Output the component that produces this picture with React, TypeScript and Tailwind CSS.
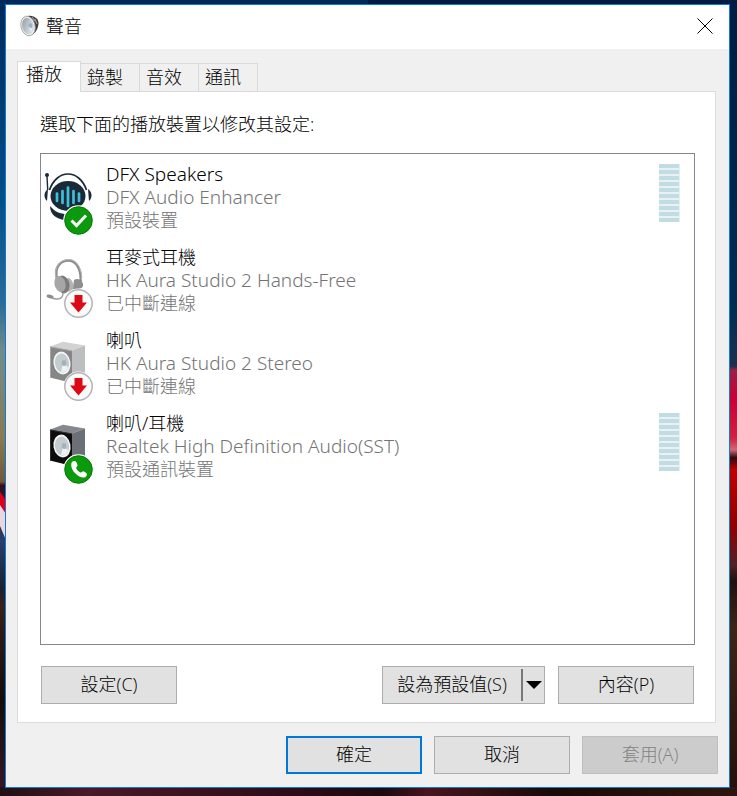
import { useState } from 'react';
import type { ReactNode } from 'react';

type Status = 'default' | 'disconnected' | 'call';

interface Device {
    name: string;
    driver: string;
    state: string;
    icon: ReactNode;
    status: Status;
    meter: boolean;
}

function Wallpaper() {
    return (
        <svg
            className="absolute inset-0 h-full w-full"
            viewBox="0 0 737 796"
            preserveAspectRatio="none"
            aria-hidden="true"
        >
            <defs>
                <linearGradient id="sky-left" x1="0" y1="0" x2="0" y2="1">
                    <stop offset="0" stopColor="#00285a" />
                    <stop offset="0.25" stopColor="#005088" />
                    <stop offset="0.38" stopColor="#2a6a98" />
                    <stop offset="0.44" stopColor="#708c8c" />
                    <stop offset="0.55" stopColor="#8a7a50" />
                    <stop offset="0.605" stopColor="#705838" />
                    <stop offset="0.61" stopColor="#301018" />
                    <stop offset="0.68" stopColor="#28406a" />
                    <stop offset="0.74" stopColor="#1a2030" />
                    <stop offset="0.76" stopColor="#3a2018" />
                    <stop offset="0.88" stopColor="#150c08" />
                    <stop offset="1" stopColor="#3a1828" />
                </linearGradient>
                <linearGradient id="sky-right" x1="0" y1="0" x2="0" y2="1">
                    <stop offset="0" stopColor="#001c44" />
                    <stop offset="0.38" stopColor="#002c54" />
                    <stop offset="0.46" stopColor="#1c3050" />
                    <stop offset="0.465" stopColor="#982048" />
                    <stop offset="0.5" stopColor="#c80038" />
                    <stop offset="0.55" stopColor="#d02040" />
                    <stop offset="0.565" stopColor="#d06878" />
                    <stop offset="0.575" stopColor="#300810" />
                    <stop offset="0.59" stopColor="#c00000" />
                    <stop offset="0.66" stopColor="#900000" />
                    <stop offset="0.71" stopColor="#502028" />
                    <stop offset="0.73" stopColor="#201010" />
                    <stop offset="0.79" stopColor="#402418" />
                    <stop offset="1" stopColor="#24100a" />
                </linearGradient>
                <linearGradient id="ground" x1="0" y1="0" x2="1" y2="0">
                    <stop offset="0" stopColor="#1e1016" />
                    <stop offset="0.12" stopColor="#4a1828" />
                    <stop offset="0.4" stopColor="#2c0c18" />
                    <stop offset="0.52" stopColor="#1c0a10" />
                    <stop offset="0.58" stopColor="#481420" />
                    <stop offset="0.75" stopColor="#180a08" />
                    <stop offset="1" stopColor="#2e160e" />
                </linearGradient>
            </defs>
            <rect width="369" height="796" fill="url(#sky-left)" />
            <rect x="368" width="369" height="796" fill="url(#sky-right)" />
            <path d="M0 492 L6 500 V514 L0 505Z" fill="#e00018" />
            <path d="M0 505 L6 514 V540 L0 526Z" fill="#ead6e0" />
            <rect y="787" width="737" height="9" fill="url(#ground)" />
        </svg>
    );
}

function TitleIcon() {
    return (
        <svg className="h-[22px] w-5" viewBox="0 0 20 22" aria-hidden="true">
            <defs>
                <linearGradient id="cone" x1="0" y1="0" x2="1" y2="1">
                    <stop offset="0" stopColor="#8e979c" />
                    <stop offset="0.6" stopColor="#c4d2d9" />
                    <stop offset="1" stopColor="#e6eef2" />
                </linearGradient>
            </defs>
            <path d="M8 1 C14 0 19 4 18.500 9 C18 14 15 19 11 20Z" fill="#3d3d3d" />
            <path d="M12 2 L15 6 M15 4 L17 9" stroke="#9a9a9a" strokeWidth="1.200" />
            <ellipse cx="8" cy="11" rx="7" ry="10" transform="rotate(-14 8 11)" fill="#f1f1f1" stroke="#9a9a9a" strokeWidth="0.800" />
            <ellipse cx="8" cy="11" rx="5.800" ry="8.400" transform="rotate(-14 8 11)" fill="url(#cone)" />
            <ellipse cx="10.500" cy="10.500" rx="2" ry="2.500" fill="#9fb0b8" />
            <path d="M9 12 L12 14 L11 17Z" fill="#eef4f6" />
        </svg>
    );
}

function RobotIcon() {
    return (
        <g>
            <circle cx="4" cy="12" r="2" fill="#1b2a38" />
            <path d="M4 13 L4.700 27" stroke="#1b2a38" strokeWidth="1.400" />
            <path d="M6.500 27 C10 17 17 11 25 11 C33 11 40 17 43.500 27" fill="none" stroke="#1b2a38" strokeWidth="1.700" />
            <path d="M5 26 C.5 29 .5 35 4 38Z" fill="#1b2a38" />
            <path d="M45 26 C49.500 29 49.500 35 46 38Z" fill="#1b2a38" />
            <ellipse cx="25" cy="33" rx="17.500" ry="15" fill="#1b2a38" />
            <path d="M7 43 C12 49 17 51 24 51 L22 57 C13 56 7 51 7 43Z" fill="#1b2a38" />
            <g stroke="#41bfd9" strokeWidth="2.700" strokeLinecap="round">
                <path d="M14 30.500 V38" />
                <path d="M19.500 28 V40" />
                <path d="M25 24.500 V43" />
                <path d="M30.500 28 V40" />
                <path d="M36 30.500 V38" />
            </g>
        </g>
    );
}

function HeadsetIcon() {
    return (
        <g>
            <path d="M14 33 C10.500 20 19 14 26 14.500 C34 15 39 25 37.500 36" fill="none" stroke="#8c8c8c" strokeWidth="2.600" />
            <path d="M13 32 C10.500 20 18 13.500 26 13.500 C35 14 39.500 25 38.500 34" fill="none" stroke="#b9b9b9" strokeWidth="1" />
            <ellipse cx="26" cy="39" rx="4.500" ry="7" transform="rotate(-14 26 39)" fill="#b5b5b5" />
            <ellipse cx="20" cy="38.500" rx="6.500" ry="9" transform="rotate(-14 20 38.500)" fill="#7b7b7b" />
            <ellipse cx="17" cy="38" rx="5.500" ry="8" transform="rotate(-14 17 38)" fill="#a6a6a6" />
            <path d="M31 34 C35 31 41 35 40 40 C39 43 34 44 30 43Z" fill="#8f8f8f" />
            <path d="M20 47 C20 54 13 54 8 51.500" fill="none" stroke="#a0a0a0" strokeWidth="1.500" />
            <ellipse cx="7" cy="50.500" rx="3.500" ry="1.800" transform="rotate(12 7 50.500)" fill="#8e8e8e" />
        </g>
    );
}

function SpeakerIcon({ front, top, side, rim }: { front: string; top: string; side: string; rim: string }) {
    return (
        <g>
            <path d="M7 17.500 L20 12.700 L42 16.500 L29 21.500Z" fill={top} />
            <path d="M29 21.500 L42 16.500 V47 L29 54Z" fill={side} />
            <path d="M7 17.500 L29 21.500 V54 L7 48.500Z" fill={front} />
            <path d="M7.500 48.500 V18 L29 22" fill="none" stroke={rim} strokeWidth="1" />
            <ellipse cx="19" cy="34" rx="8.500" ry="11.500" transform="rotate(-10 19 34)" fill="#f4f4f4" />
            <ellipse cx="19" cy="34" rx="7" ry="9.500" transform="rotate(-10 19 34)" fill="#c3ccd1" />
            <path d="M20 35 L25 38 C25 42 22 43 18 43 C19 40 19 37 20 35Z" fill="#edf2f4" />
            <ellipse cx="21" cy="34" rx="2.300" ry="3" fill="#a6b1b8" />
        </g>
    );
}

function StatusBadge({ status }: { status: Status }) {
    if (status === 'disconnected') {
        return (
            <g>
                <circle cx="35.500" cy="57.500" r="15" fill="#fff" />
                <circle cx="35.500" cy="57.500" r="13.700" fill="#fafafa" stroke="#b4b4b4" strokeWidth="1.500" />
                <path d="M31.500 49 H39.500 V56.500 H44 L35.500 66.500 L27 56.500 H31.500Z" fill="#db0a14" />
            </g>
        );
    }

    return (
        <g>
            <circle cx="35.500" cy="57.500" r="15.300" fill="#fff" />
            <circle cx="35.500" cy="57.500" r="13.800" fill="#0b9a0b" stroke="#087808" strokeWidth="1" />
            {status === 'default' ? (
                <path d="M28.500 57.500 L33.500 62.500 L43 52.500" fill="none" stroke="#fff" strokeWidth="3" />
            ) : (
                <path
                    d="M29 50 C30 48.500 32.500 48.500 33.300 50 L34.500 53 C34.800 54 33 55.500 33.200 56.300 C34 58.300 35.500 59.800 37.500 60.500 C38.500 60.700 39.500 59 40.500 59.300 L43.300 61 C44.500 62 44 64 42.500 65 C39.500 66.500 35 64.500 32 61 C28.500 57.500 27.300 52.500 29 50Z"
                    fill="#fff"
                />
            )}
        </g>
    );
}

const devices: Device[] = [
    {
        name: 'DFX Speakers',
        driver: 'DFX Audio Enhancer',
        state: '預設裝置',
        icon: <RobotIcon />,
        status: 'default',
        meter: true,
    },
    {
        name: '耳麥式耳機',
        driver: 'HK Aura Studio 2 Hands-Free',
        state: '已中斷連線',
        icon: <HeadsetIcon />,
        status: 'disconnected',
        meter: false,
    },
    {
        name: '喇叭',
        driver: 'HK Aura Studio 2 Stereo',
        state: '已中斷連線',
        icon: <SpeakerIcon front="#868686" top="#d2d2d2" side="#bcbec0" rim="#a8a8a8" />,
        status: 'disconnected',
        meter: false,
    },
    {
        name: '喇叭/耳機',
        driver: 'Realtek High Definition Audio(SST)',
        state: '預設通訊裝置',
        icon: <SpeakerIcon front="#0c0c0c" top="#85888c" side="#6b6f76" rim="#2e2e2e" />,
        status: 'call',
        meter: true,
    },
];

const tabs = ['播放', '錄製', '音效', '通訊'];

function LevelMeter() {
    return (
        <div className="flex w-[21px] flex-col gap-[2px] border-r border-[#e4eff2] bg-[#e8f2f5]">
            {Array.from({ length: 10 }, (_, i) => (
                <span key={i} className="h-1 bg-[#c1dce3]" />
            ))}
        </div>
    );
}

// Latin glyphs look smaller than the CJK ones, so Latin-only lines are set one size up
function DeviceText({ children }: { children: string }) {
    const latin = /^[\x20-\x7e]+$/.test(children);
    return <span className={latin ? 'block h-[23px] text-[19px]' : 'block h-[23px]'}>{children}</span>;
}

function DeviceRow({ device }: { device: Device }) {
    return (
        <li className="flex items-start pr-[14px] pl-[2px]">
            <svg className="h-[73px] w-[52px] shrink-0 -mb-1" viewBox="0 0 52 73" aria-hidden="true">
                {device.icon}
                <StatusBadge status={device.status} />
            </svg>
            <div className="ml-[11px] flex-1 font-['Noto_Sans','Noto_Sans_CJK_TC',sans-serif] leading-[23px] text-[#747474]">
                <div className="text-black">
                    <DeviceText>{device.name}</DeviceText>
                </div>
                <DeviceText>{device.driver}</DeviceText>
                <DeviceText>{device.state}</DeviceText>
            </div>
            {device.meter && (
                <div className="pt-px">
                    <LevelMeter />
                </div>
            )}
        </li>
    );
}

const buttonClass = 'h-[38px] w-[136px] border border-[#adadad] bg-[#e1e1e1] pb-[3px]';

export default function App() {
    const [active, setActive] = useState(0);

    return (
        <div className="relative flex min-h-screen flex-col pt-1 pr-[7px] pb-2 pl-[5px] font-['Open_Sans','Noto_Sans_CJK_TC',sans-serif] text-[18px] leading-6 font-light text-black">
            <Wallpaper />
            <main className="relative flex flex-1 flex-col border border-[#0f7ad8] bg-[#f0f0f0]">
                <header className="flex h-11 items-center bg-white pr-4 pb-[2px] pl-[14px]">
                    <TitleIcon />
                    <h1 className="ml-[6px] flex-1">聲音</h1>
                    <button type="button" aria-label="關閉">
                        <svg className="size-4" viewBox="0 0 16 16" aria-hidden="true">
                            <path d="M.5 .5 L15.500 15.500 M15.500 .5 L.5 15.500" stroke="#000" strokeWidth="1" />
                        </svg>
                    </button>
                </header>

                <div className="flex flex-1 flex-col pt-3 pr-[13px] pl-[11px]">
                    <div role="tablist" className="z-10 -mb-px flex items-end">
                        {tabs.map((tab, i) => (
                            <button
                                key={tab}
                                type="button"
                                role="tab"
                                aria-selected={i === active}
                                onClick={() => setActive(i)}
                                className={
                                    i === active
                                        ? 'h-[31px] w-16 border border-b-0 border-[#d9d9d9] bg-white pb-[6px] pl-2 text-left'
                                        : 'h-[29px] w-[59px] border border-l-0 border-[#d9d9d9] bg-[#f0f0f0] pb-[2px] pl-[6px] text-left'
                                }
                            >
                                {tab}
                            </button>
                        ))}
                    </div>

                    <section className="flex flex-1 flex-col border border-[#dcdcdc] bg-white pt-5 pr-5 pb-[18px] pl-[22px]">
                        <p>選取下面的播放裝置以修改其設定:</p>
                        <ul className="mt-[17px] flex flex-1 flex-col gap-[14px] border border-[#828790] py-[9px]">
                            {devices.map((device) => (
                                <DeviceRow key={device.name} device={device} />
                            ))}
                        </ul>
                        <div className="mt-[21px] flex justify-between px-px">
                            <button type="button" className={buttonClass}>
                                設定(C)
                            </button>
                            <div className="flex gap-[13px]">
                                <div className="flex h-[38px] w-[163px] items-center border border-[#adadad] bg-[#e1e1e1]">
                                    <button type="button" className="flex-1 pb-[3px]">
                                        設為預設值(S)
                                    </button>
                                    <button
                                        type="button"
                                        aria-label="更多選項"
                                        className="flex h-8 w-[23px] items-center justify-center border-l-2 border-[#777]"
                                    >
                                        <svg className="h-2 w-4" viewBox="0 0 16 8" aria-hidden="true">
                                            <path d="M0 0 H16 L8 8Z" />
                                        </svg>
                                    </button>
                                </div>
                                <button type="button" className={buttonClass}>
                                    內容(P)
                                </button>
                            </div>
                        </div>
                    </section>
                </div>

                <footer className="flex justify-end gap-3 pt-[13px] pr-[11px] pb-[13px]">
                    <button type="button" className="h-[38px] w-[136px] border-2 border-[#0078d7] bg-[#e1e1e1] pb-[3px]">
                        確定
                    </button>
                    <button type="button" className={buttonClass}>
                        取消
                    </button>
                    <button
                        type="button"
                        disabled
                        className="h-[38px] w-[136px] border border-[#bfbfbf] bg-[#cccccc] pb-[3px] text-[#838383]"
                    >
                        套用(A)
                    </button>
                </footer>
            </main>
        </div>
    );
}
